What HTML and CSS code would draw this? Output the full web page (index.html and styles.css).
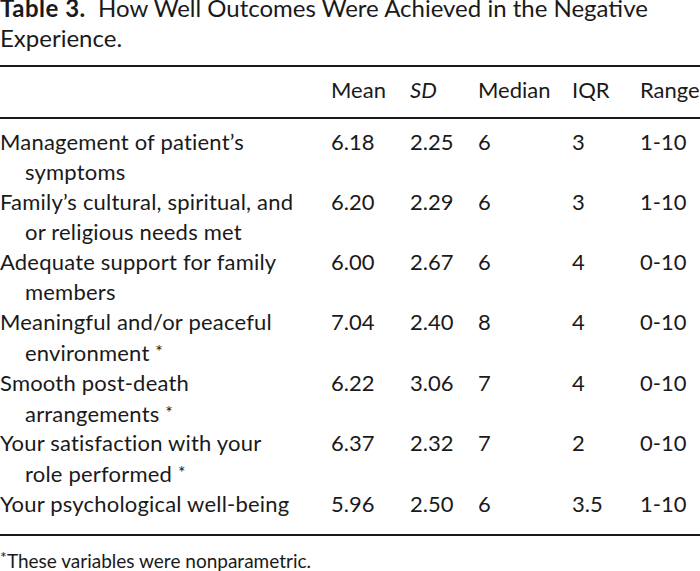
FILE: index.html
```html
<!DOCTYPE html>
<html lang="en">
<head>
<meta charset="utf-8">
<title>Table 3</title>
<link rel="stylesheet" href="styles.css">
</head>
<body>
<div class="page">
  <p class="caption"><b class="label">Table 3.</b>&nbsp; How Well Outcomes Were Achieved in the Negative Experience.</p>
  <table class="data">
    <thead>
      <tr>
        <th class="name"></th>
        <th class="c-mean">Mean</th>
        <th class="c-sd"><i>SD</i></th>
        <th class="c-med">Median</th>
        <th class="c-iqr">IQR</th>
        <th class="c-range">Range</th>
      </tr>
    </thead>
    <tbody>
      <tr class="first">
        <td class="name">Management of patient’s<br>symptoms</td>
        <td>6.18</td><td>2.25</td><td>6</td><td>3</td><td>1-10</td>
      </tr>
      <tr>
        <td class="name">Family’s cultural, spiritual, and<br>or religious needs met</td>
        <td>6.20</td><td>2.29</td><td>6</td><td>3</td><td>1-10</td>
      </tr>
      <tr>
        <td class="name">Adequate support for family<br>members</td>
        <td>6.00</td><td>2.67</td><td>6</td><td>4</td><td>0-10</td>
      </tr>
      <tr>
        <td class="name">Meaningful and/or peaceful<br>environment <span class="ast">*</span></td>
        <td>7.04</td><td>2.40</td><td>8</td><td>4</td><td>0-10</td>
      </tr>
      <tr>
        <td class="name">Smooth post-death<br>arrangements <span class="ast">*</span></td>
        <td>6.22</td><td>3.06</td><td>7</td><td>4</td><td>0-10</td>
      </tr>
      <tr>
        <td class="name">Your satisfaction with your<br>role performed <span class="ast">*</span></td>
        <td>6.37</td><td>2.32</td><td>7</td><td>2</td><td>0-10</td>
      </tr>
      <tr class="last">
        <td class="name">Your psychological well-being</td>
        <td>5.96</td><td>2.50</td><td>6</td><td>3.5</td><td>1-10</td>
      </tr>
    </tbody>
  </table>
  <p class="note"><span class="ast">*</span>These variables were nonparametric.</p>
</div>
</body>
</html>
```

FILE: styles.css
```css
html, body {
  margin: 0;
  padding: 0;
  background: #ffffff;
}

.page {
  width: 700px;
  color: #1a1a1a;
  font-family: Lato, "Open Sans", sans-serif;
  font-size: 22px;
  line-height: 30px;
}

.caption {
  margin: -7px 0 0 0;
  font-size: 24px;
  line-height: 30px;
}

.caption .label {
  font-weight: 700;
  letter-spacing: 0.5px;
}

.data {
  width: 700px;
  border-collapse: collapse;
  table-layout: fixed;
  margin-top: 12px;
}

.data th,
.data td {
  padding: 0;
  text-align: left;
  vertical-align: top;
  font-weight: 400;
}

.data thead tr {
  border-top: 2px solid #1a1a1a;
  border-bottom: 2px solid #1a1a1a;
}

.data thead th {
  padding-top: 8px;
  padding-bottom: 12px;
}

.data .name {
  width: 331px;
  padding-left: 25px;
  text-indent: -25px;
  box-sizing: border-box;
  letter-spacing: 0.2px;
}

.data .c-mean { width: 79px; }
.data .c-sd { width: 68px; }
.data .c-med { width: 94px; }
.data .c-iqr { width: 68px; }
.data .c-range { width: 60px; }

.data tbody tr.first td {
  padding-top: 8px;
}

.data tbody tr.last td {
  padding-bottom: 15px;
}

.data tbody tr.last {
  border-bottom: 2px solid #1a1a1a;
}

.ast {
  font-size: 0.8em;
  vertical-align: 0.15em;
}

.note {
  margin: 8px 0 0 0;
  font-size: 19px;
  line-height: 26px;
}

.note .ast {
  font-size: 0.85em;
  vertical-align: 0.3em;
}
```
